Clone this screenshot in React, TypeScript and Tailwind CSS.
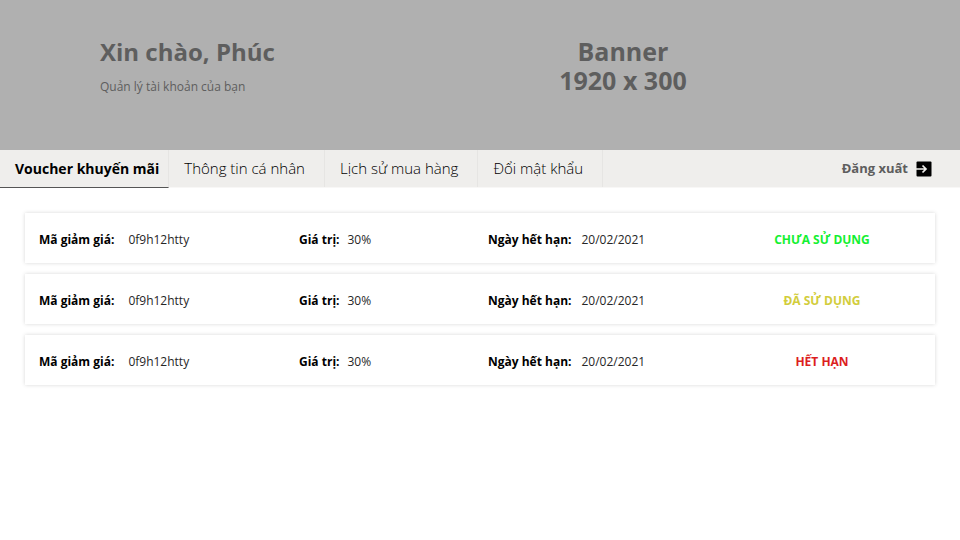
type Voucher = {
  code: string;
  value: string;
  expires: string;
  status: string;
  tone: string;
};

const vouchers: Voucher[] = [
  { code: "0f9h12htty", value: "30%", expires: "20/02/2021", status: "CHƯA SỬ DỤNG", tone: "text-[#14f032]" },
  { code: "0f9h12htty", value: "30%", expires: "20/02/2021", status: "ĐÃ SỬ DỤNG", tone: "text-[#d2cd3c]" },
  { code: "0f9h12htty", value: "30%", expires: "20/02/2021", status: "HẾT HẠN", tone: "text-[#dc1e1e]" },
];

const tabs = ["Thông tin cá nhân", "Lịch sử mua hàng", "Đổi mật khẩu"];

function LogoutIcon() {
  return (
    <svg viewBox="0 0 16 16" className="size-4" aria-hidden="true">
      <rect x="0.5" y="0.5" width="15" height="15" rx="1" fill="#000" />
      <path d="M0 8h10M6.5 4.5 10 8l-3.5 3.5" fill="none" stroke="#efeeec" strokeWidth="1.7" />
    </svg>
  );
}

function VoucherCard({ voucher }: { voucher: Voucher }) {
  return (
    <li className="grid h-[50px] grid-cols-[260fr_189fr_235fr_198fr] items-center bg-white px-3.5 pt-1 text-xs shadow-[0_0_4px_rgba(0,0,0,0.16)]">
      <dl className="flex gap-3.5">
        <dt className="font-bold">Mã giảm giá:</dt>
        <dd className="text-neutral-800">{voucher.code}</dd>
      </dl>
      <dl className="flex gap-2">
        <dt className="font-bold">Giá trị:</dt>
        <dd className="text-neutral-800">{voucher.value}</dd>
      </dl>
      <dl className="flex gap-2.5">
        <dt className="font-bold">Ngày hết hạn:</dt>
        <dd className="text-neutral-800">{voucher.expires}</dd>
      </dl>
      <strong className={`text-center font-bold ${voucher.tone}`}>{voucher.status}</strong>
    </li>
  );
}

export default function App() {
  return (
    <div className="min-h-screen bg-white font-['Open_Sans','Noto_Sans',sans-serif] text-black">
      <header className="grid h-[150px] grid-cols-[100fr_385fr_276fr_199fr] bg-[#b0b0b0] pt-9 text-[#5e5e5e]">
        <div className="col-start-2">
          <h1 className="text-2xl font-bold">Xin chào, Phúc</h1>
          <p className="mt-[11px] text-xs">Quản lý tài khoản của bạn</p>
        </div>
        <div className="pt-px text-center text-[25px] leading-[29px] font-bold">
          <p>Banner</p>
          <p>1920 x 300</p>
        </div>
      </header>

      <nav className="flex h-[38px] border-b border-[#f8f7f6] bg-[#efeeec] text-sm">
        <button className="-mb-px border-r border-b border-r-[#e6e5e3] border-b-[#555555] pr-[9px] pl-[15px] font-bold">
          Voucher khuyến mãi
        </button>
        {tabs.map((tab) => (
          <button key={tab} className="border-r border-[#e6e5e3] pr-[19px] pl-[15px] text-[15px] font-light">
            {tab}
          </button>
        ))}
        <a href="#logout" className="mr-7 ml-auto flex items-center gap-2 text-[13px] font-bold text-[#5e5e5e]">
          Đăng xuất
          <LogoutIcon />
        </a>
      </nav>

      <main className="px-[25px] py-[25px]">
        <ul className="flex flex-col gap-[11px]">
          {vouchers.map((voucher) => (
            <VoucherCard key={voucher.status} voucher={voucher} />
          ))}
        </ul>
      </main>
    </div>
  );
}
